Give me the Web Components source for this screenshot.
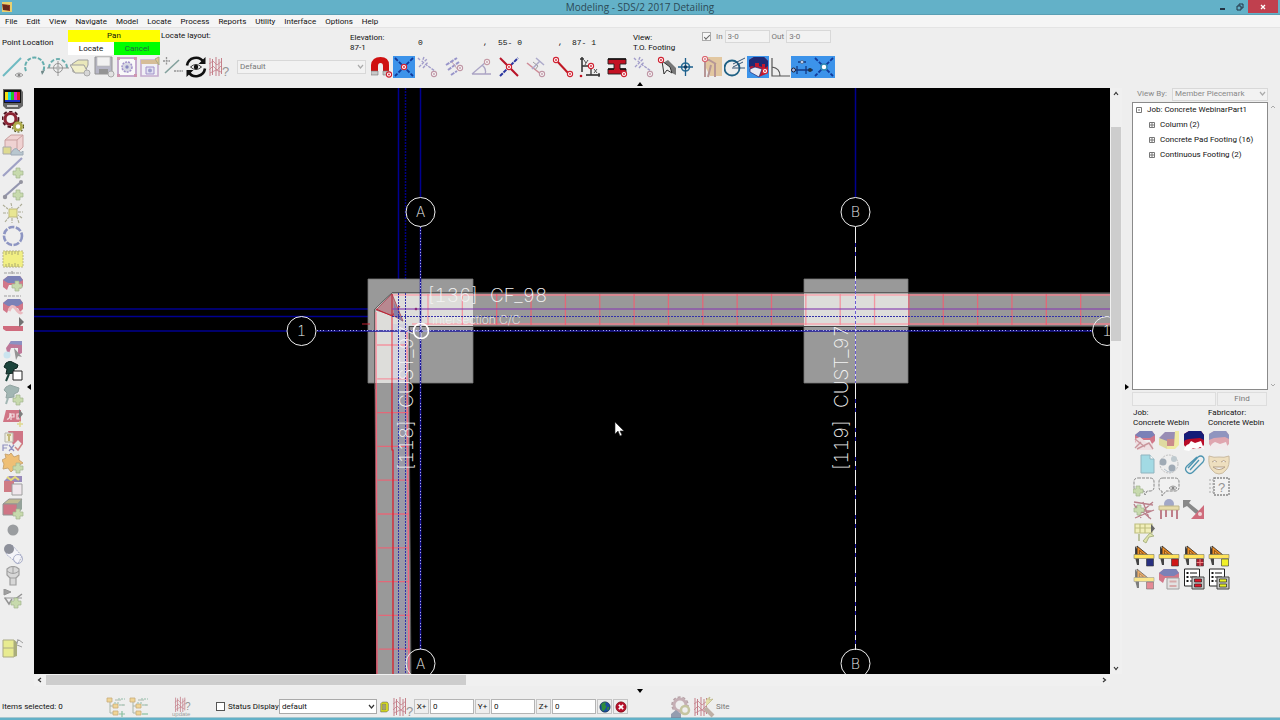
<!DOCTYPE html>
<html lang="en">
<head>
<meta charset="utf-8">
<title>Modeling - SDS/2 2017 Detailing</title>
<style>
html, body { margin: 0; height: 100%; }
body { font: 8px/10px Roboto, "Open Sans", sans-serif; color: #111; background: #eee; overflow: hidden; }
</style>
</head>
<body>
<modeling-app></modeling-app>
<script>
const BASE = `*{box-sizing:border-box}button,input,select{font:inherit;color:inherit;margin:0;border-radius:0}svg{display:block}`;

function define(name, css, html, setup) {
  const t = document.createElement('template');
  t.innerHTML = `<style>${BASE}${css}</style>${html}`;
  customElements.define(name, class extends HTMLElement {
    constructor() {
      super();
      this.attachShadow({ mode: 'open' }).append(t.content.cloneNode(true));
    }
    connectedCallback() { if (setup) setup(this, this.shadowRoot); }
  });
}

/* ---------- icon drawings, all on a 22 x 22 grid ---------- */
const PLUS = (x, y, c = '#b4d08c') => `<path d="M${x + 3} ${y}h4v3h3v4h-3v3h-4v-3h-3v-4h3z" fill="${c}" stroke="#7c9a60" stroke-width=".7"/>`;
const TARGET = (x, y, c = '#d02030') => `<circle cx="${x}" cy="${y}" r="2.6" fill="#fff" stroke="${c}" stroke-width="1.1"/><circle cx="${x}" cy="${y}" r=".9" fill="${c}"/>`;
const EYE = (x, y, c = '#555') => `<path d="M${x - 4} ${y}q4-4 8 0q-4 4-8 0z" fill="#eee" stroke="${c}" stroke-width=".8"/><circle cx="${x}" cy="${y}" r="1.5" fill="${c}"/>`;
const FENCE = `<g fill="none" stroke="#b04858" stroke-width="1"><path d="M2 2v18M4.500 3v16M8 1v19M11 3v17M13.500 2v16"/><path d="M1 8l4-3 4 4 5-4M1 14l4-4 4 4 5-5M2 17l6-3 5 2" stroke-width=".8"/></g>`;
const BEAM = (x, y, s = 1) => `<g transform="translate(${x} ${y}) scale(${s})"><path d="M1 4l5-4h12l3 4v6l-3 3-2-4H7l-2 5-4-3z" fill="#c43a56"/><path d="M1 4l5-4h12l3 4-5 3H6z" fill="#41499c"/></g>`;
const SQUARE = (c) => `<path d="M2 1l4 6v13H4L2 12z" fill="#444"/><path d="M4 1l11 9H4z" fill="#e98a24" stroke="#222" stroke-width=".8"/><path d="M6.500 5.500l4 3.500h-4z" fill="#fff3" stroke="#553000" stroke-width=".6"/><path d="M1 9.500h20v4H1z" fill="#ffe25a" stroke="#776" stroke-width=".6"/><path d="M13.500 14h7v7h-7z" fill="${c}" stroke="#333" stroke-width=".6"/>`;
const LIST = (c) => `<path d="M1.500 1h15v17h-15z" fill="#fff" stroke="#222"/><path d="M7 5h7M7 9h7M7 13h4" stroke="#111" stroke-width="1.200"/><path d="M3.500 4h2v2h-2zM3.500 8h2v2h-2zM3.500 12h2v2h-2z" fill="#111"/><path d="M9 9h12v12H9z" fill="#c8c8c8" stroke="#444"/><path d="M11.500 11h7v3h-7zM11.500 16h7v3h-7z" fill="${c}" stroke="#222" stroke-width=".7"/>`;
const Q = (x, y, s = 13) => `<text x="${x}" y="${y}" font-family="Liberation Sans,sans-serif" font-size="${s}" fill="#666">?</text>`;
const TREE = (s) => `<path d="M5 4v13M5 10h5M5 17h5M10 4h6M16 9h4" fill="none" stroke="#8a9a8a" stroke-width="1"/><path d="M2 2h5v4H2zM8 8h5v4H8zM8 15h5v4H8z" fill="#f2c96a" stroke="#b58a40" stroke-width=".8"/><path d="M13 3h7M14 9h6M9 7h6" stroke="#93bda8" stroke-width="1.500" stroke-dasharray="2 1"/>${s}`;

const ICONS = {
  line: `<path d="M2 20L20 2" stroke="#2da0ac" stroke-width="2"/>${EYE(18, 19)}`,
  arc: `<path d="M2 15a9.500 9.500 0 1 1 16 2" fill="none" stroke="#1d8d8d" stroke-width="2" stroke-dasharray="4 1.500"/><path d="M17 15l4-1-3 5z" fill="#355"/>`,
  centre: `<path d="M2 12a9 9 0 0 1 18 0" fill="none" stroke="#2c8f8f" stroke-width="2" stroke-dasharray="4 2"/><path d="M0 12h22M11 5v15" stroke="#666"/><circle cx="11" cy="12" r="4.500" fill="none" stroke="#666"/><circle cx="11" cy="12" r="2" fill="#999"/>`,
  folder: `<path d="M2 8l6-4h10v5l-3 7H3z" fill="#e9e6a0" stroke="#777"/><path d="M0 9h14l4 8H5z" fill="#f4f1b8" stroke="#777"/><circle cx="17" cy="17" r="3" fill="#ccc" stroke="#888"/>`,
  disk: `<path d="M2 1h17v17H2z" fill="#9a9ab0" stroke="#666"/><path d="M4 1h13v9H4z" fill="#f4f4f4" stroke="#999" stroke-width=".6"/><path d="M6 13h9v5H6z" fill="#666"/><circle cx="18" cy="18" r="3" fill="#ddd" stroke="#888"/>`,
  frame: `<path d="M2 2h18v18H2z" fill="#fff" stroke="#b08ac0" stroke-width="2"/><circle cx="11" cy="11" r="5" fill="#ccd" stroke="#7a62b8" stroke-width="1.500" stroke-dasharray="2 1"/><circle cx="11" cy="11" r="1.700" fill="#55a"/><path d="M1 1h3v3H1zM18 1h3v3h-3zM1 18h3v3H1zM18 18h3v3h-3z" fill="#c06a90"/>`,
  layout: `<path d="M2 4h17v16H2z" fill="#f2f2fa" stroke="#b08ac0" stroke-width="1.600"/><path d="M2 4h18v4H2z" fill="#caa46c"/><path d="M7 11h8v7H7z" fill="#dcdcf4" stroke="#7a62b8"/><circle cx="11" cy="14.500" r="2" fill="#77b"/><path d="M16 3l4-2v8z" fill="#e0b060" stroke="#885"/>`,
  plusminus: `<path d="M1 5h7M4.500 1v8M12 15h9" stroke="#666" stroke-width="1.300" stroke-dasharray="2 .7"/><path d="M3 17L17 4" stroke="#4d7a74" stroke-width="1.600"/>`,
  refresh: `<g fill="none" stroke="#111" stroke-width="2.600"><path d="M2 9.500A9 9 0 0 1 18.500 6M20 12.500A9 9 0 0 1 3.500 16"/></g><path d="M20.500 1v7h-7zM1.500 21v-7h7z" fill="#111"/><path d="M5.500 11q5.500-5 11 0q-5.500 5-11 0z" fill="#fff" stroke="#333"/><circle cx="11" cy="11" r="2.300" fill="#111"/>`,
  fenceq: `${FENCE}${Q(14, 20)}`,
  magnet: `<path d="M0 17V9Q1 1 9.500 1T18 9v8h-6V10q0-3-2.500-3T7 10v7z" fill="#cf1010"/><path d="M0 15h7v4H0zM12 15h6v4h-6z" fill="#c8c8c8" stroke="#777" stroke-width=".6"/>${TARGET(18, 18.5)}`,
  snapx: `<path d="M2 2l18 18M20 2L2 20" stroke="#123a9a" stroke-width="1.800" stroke-dasharray="4 1.500"/>${TARGET(11, 11)}`,
  nearest: `<path d="M1 2l2 2M7 1l-2 5M2 11l8-8M8 8l10 7M6 12l5-6" stroke="#7b74b8" stroke-width="1.400" stroke-dasharray="3 1"/>${TARGET(17, 18, '#a86a80')}`,
  parallel: `<path d="M2 9l11-7M4 14l11-8M7 19l6-4" stroke="#6d68b8" stroke-width="2" stroke-dasharray="4 1"/><path d="M8 6l6 8" stroke="#b08090"/>${TARGET(16, 12, '#a86a80')}`,
  angle: `<path d="M1 18h19M1 18L15 6M11 9q5 4 3 9" fill="none" stroke="#8a7fb0" stroke-width="1.300"/>${TARGET(16, 6, '#b07080')}`,
  cross: `<path d="M2 20L20 2" stroke="#2b36a0" stroke-width="2" stroke-dasharray="4 1"/><path d="M2 2l18 18" stroke="#b81428" stroke-width="2"/>${TARGET(11, 11)}`,
  perp: `<path d="M2 7l15 12" stroke="#c0586a" stroke-width="1.600"/><path d="M7 13l8-8M11 2l8 7" stroke="#8c88b8" stroke-width="1.500"/><path d="M8 6l5 4-3 4" fill="none" stroke="#777"/>${TARGET(17, 18, '#a86a80')}`,
  endpts: `<path d="M4 4l13 14" stroke="#c01824" stroke-width="2"/>${TARGET(4, 4)}${TARGET(18, 18)}`,
  axes: `<path d="M3 1v15M7 19h14" stroke="#222" stroke-width="1.400"/><path d="M3 10h7M12 12v7M1 3h4M20 17v4" stroke="#333" stroke-width="1.300"/><path d="M5 4l2 3 2-3M7 7l-1 2M15 13l3 4M18 13l-3 4" fill="none" stroke="#444" stroke-width=".9"/>${TARGET(12, 10)}<circle cx="2" cy="20" r="1.300" fill="#c01020"/>`,
  ibeam: `<path d="M2 3h18v5h-6v5h6v5H2v-5h6V8H2z" fill="#c41224" stroke="#222" stroke-width=".9"/><path d="M2 3h18M2 13h6M14 13h6" stroke="#111" stroke-width="1.500"/>${TARGET(18, 18)}`,
  pick: `<path d="M8 7l5-3 8 8v7l-4-2z" fill="#777"/><path d="M7 5l2 13 3-4 5 3-2-6z" fill="#eee" stroke="#333"/>${TARGET(6, 4)}`,
  cross2: `<circle cx="7.500" cy="11" r="4" fill="none" stroke="#2c6f96" stroke-width="1.600"/><path d="M0 11h15M7.500 2v18" stroke="#1d5f8c" stroke-width="1.300"/><circle cx="7.500" cy="11" r="1.800" fill="#123c60"/>`,
  detail: `<path d="M5 1h16v19H9L5 12z" fill="#dcb478"/><path d="M1 4h7l7 4M4 6v15M10 9l-3 12M14 8v13" fill="none" stroke="#9a6a6a" stroke-width="2"/>${TARGET(4, 3)}`,
  circle: `<circle cx="8" cy="12" r="7.500" fill="none" stroke="#1e6084" stroke-width="1.800"/><path d="M8 12h13M9 8l12-6M9 11l10-5" stroke="#246" stroke-width=".9"/>`,
  solid: `<path d="M2 4l5-3h10l4 4v12l-9 4-9-6z" fill="#c01830"/><path d="M2 4l5-3h10l4 4v5l-3 2V8h-3v3l-3-1V7H8v4l-3-1-3 1z" fill="#1e2a74"/><path d="M3 13l5-2 7 2-3 8-9-5z" fill="#e8e8f2" stroke="#1e2a74" stroke-width=".7"/>${TARGET(18, 15)}`,
  corner: `<path d="M2 2v18h18M2 11q8 1 8 9" fill="none" stroke="#555" stroke-width="1.200"/>`,
  chain: `<path d="M1 14h21M6 10v8M15 10v8M7 6h8" stroke="#123a84" stroke-width="1.300"/><circle cx="2.500" cy="14" r="2" fill="#a0b8e8" stroke="#223"/><circle cx="19" cy="14" r="2" fill="#234"/><circle cx="11" cy="6" r="1.600" fill="#c8d8f8" stroke="#456" stroke-width=".6"/>`,
  snapw: `<path d="M2 2l18 18M20 2L2 20" stroke="#123a9a" stroke-width="1.800" stroke-dasharray="4 1.500"/><circle cx="11" cy="11" r="3" fill="#fff" stroke="#2c86b0" stroke-width="1.500"/>`,

  monitor: `<path d="M1 1h18l2 3v14l-4 3H4l-3-3z" fill="#666"/><path d="M2 2h17v13H2z" fill="#111"/><path d="M3 4h3v8H3z" fill="#f4e010"/><path d="M6 4h3v8H6z" fill="#18d8e0"/><path d="M9 4h3v8H9z" fill="#20c820"/><path d="M12 4h3v8h-3z" fill="#e020d0"/><path d="M15 4h3v8h-3z" fill="#e02020"/><path d="M3 12h15v2H3z" fill="#1830c0"/><path d="M5 17h11v2H5z" fill="#ccc"/>`,
  gears: `<circle cx="8.500" cy="8" r="8" fill="none" stroke="#4b1420" stroke-width="1.800" stroke-dasharray="3.500 2.500"/><circle cx="8.500" cy="8" r="5.500" fill="#f4f4f4" stroke="#8c2434" stroke-width="3.200"/><circle cx="16" cy="15.500" r="5.500" fill="none" stroke="#55551c" stroke-width="1.200" stroke-dasharray="2 1.500"/><circle cx="16" cy="15.500" r="3.600" fill="#fff" stroke="#aeac4c" stroke-width="2.800"/>`,
  cube: `<path d="M3 6l6-5h12v12l-5 5H3z" fill="#f0c4c4" stroke="#b87878"/><path d="M3 6h12v12M15 6l6-5" fill="none" stroke="#b87878"/><path d="M1 13h8v7H1z" fill="#d6d060" stroke="#888"/><path d="M9 19q4-7 7-3t5 1v4H9z" fill="#9fb4c0" stroke="#789"/>`,
  segplus: `<path d="M1 19L20 1" stroke="#777ab0" stroke-width="2.200"/>${PLUS(11, 11)}`,
  segdots: `<path d="M2 18L19 3" stroke="#666a90" stroke-width="2.200"/><circle cx="3" cy="18" r="2.200" fill="#667"/><circle cx="19" cy="3" r="2" fill="#667"/>${PLUS(11, 11)}`,
  sun: `<path d="M7 7h8v8H7z" fill="#e6e264" stroke="#a8a040"/><path d="M1 3l5 4M9 1l1 5M20 2l-5 5M1 11h5M16 10h5M3 20l4-5M10 16v5M17 21l-2-6M20 16l-4-3" stroke="#8a8a68" stroke-width="1.100" stroke-dasharray="3 1"/>`,
  ring: `<circle cx="11" cy="11" r="9" fill="none" stroke="#5c68ac" stroke-width="2.600" stroke-dasharray="6 1.500"/>`,
  ruler: `<path d="M1 3h20v16H1z" fill="#f3f04c" stroke="#a09c50" stroke-dasharray="2 1"/><path d="M4 3v4M7 3v3M10 3v4M13 3v3M16 3v4M4 19v-3M7 19v-4M10 19v-3M13 19v-4M16 19v-3" stroke="#8a8630"/>`,
  beamplus: `${BEAM(0, 6)}<path d="M2 3h17M10 1v4" stroke="#777" stroke-width="1.200" stroke-dasharray="3 1"/>${PLUS(10, 11)}`,
  beamlink: `${BEAM(0, 6)}<path d="M2 3h17" stroke="#777" stroke-width="1.200" stroke-dasharray="3 1"/><path d="M7 18q3-8 7-2t6 3" fill="none" stroke="#e8a0a8" stroke-width="3"/>`,
  redbar: `<path d="M1 10h20v5H4l-3-2z" fill="#c02844"/><path d="M17 1l5 5-5 5z" fill="#333"/>`,
  beamarrow: `<path d="M4 9l5-7h11v12l-4 2v-7H9l-3 8z" fill="#a83a6c"/><path d="M7 5l2-3h11v4z" fill="#5a60ac"/><circle cx="5" cy="16" r="3.500" fill="#b8e0f0"/><path d="M12 9l2 12 2-4 4 1z" fill="#666"/>`,
  pin: `<path d="M4 2l4-2 8 4-1 3-3 1v4l-8 1 1-5-3-2z" fill="#1c443c" stroke="#0c2420"/><path d="M7 13l-3 7" stroke="#1c443c" stroke-width="2"/><path d="M11 10h9v9h-9z" fill="#fff" stroke="#222"/>`,
  pinplus: `<path d="M4 3l4-2 9 3-1 4-4 2v3l-8 1 1-5-3-3z" fill="#7c9a96" stroke="#64807c"/><path d="M6 14l-2 6" stroke="#7c9a96" stroke-width="2"/>${PLUS(11, 11)}`,
  jpg: `<path d="M4 3h15v12H1z" fill="#c23850"/><path d="M5 12q3 1 3-6M9 13V7h3v3H9M18 7h-3v5h2v-2" fill="none" stroke="#f4d8dc" stroke-width="1.200"/><path d="M17 2l4 5-4 5z" fill="#444"/><path d="M18 14v6M15 17h6" stroke="#d8d060" stroke-width="1.500"/>`,
  fx: `<path d="M6 1h15v14l-5-5-5 5z" fill="#c03850"/><path d="M3 3h8v9H3z" fill="#f0ecd0" stroke="#998"/><path d="M7 4v7M5 5h4" stroke="#b0a040" stroke-width="2"/><path d="M1 21v-6h5M1 18h4M7 15l5 6M12 15l-5 6" fill="none" stroke="#6060a8" stroke-width="1.200"/><path d="M13 17l3 3 4-6" fill="none" stroke="#c05050" stroke-width="1.500"/>`,
  star: `<path d="M9 1l3 4 5-2v5l4 3-4 2v5l-5-1-3 3-3-4-5 1 1-5-2-4 4-2-1-4 4 1z" fill="#f0a838" stroke="#b88030"/>${PLUS(11, 11)}`,
  cubered: `<path d="M2 6l5-5h13v6H8v10H2z" fill="#6c58a0"/><path d="M2 6h10v11H2z" fill="#c04050"/><path d="M5 2l4 3 4-3 4 3" fill="none" stroke="#e0d040" stroke-width="2"/><path d="M10 9h10v11H10z" fill="#f0e4ec" stroke="#777"/>`,
  cubeplus: `<path d="M1 6l6-5h13l-4 5z" fill="#a8a060" stroke="#666"/><path d="M1 6h14v11H1z" fill="#c03850" stroke="#666"/><path d="M15 6l5-5v10l-5 6z" fill="#667c70"/>${PLUS(11, 11)}`,
  dot: `<circle cx="11" cy="9" r="5.500" fill="#707478"/>`,
  cylinder: `<path d="M10 2l10 11-4 8L4 11z" fill="#f8f8ff" stroke="#8890b8" stroke-dasharray="2 1"/><circle cx="7" cy="6" r="5" fill="#5c6070"/><circle cx="16" cy="16" r="4.500" fill="none" stroke="#8890b8"/>`,
  column: `<path d="M5 3q6-5 12 0v6l-3 3v7H8v-7L5 9z" fill="#ccc" stroke="#777" stroke-width="1.200"/><path d="M5 5q6 5 12 0M8 12h6M11 1v6" fill="none" stroke="#777"/>`,
  flags: `<path d="M2 0v6l7-3zM2 9h18" fill="#777" stroke="#666" stroke-width="1"/><path d="M3 9l4 6 3-5M20 5l-8 6" fill="none" stroke="#666" stroke-width="1.500"/>${PLUS(9, 9)}`,
  chest: `<path d="M1 3h11v17H1z" fill="#e6ea60" stroke="#8a8a50"/><path d="M1 11h11" stroke="#8a8a50"/><path d="M12 3l3 2v14l-3 1z" fill="#888c40"/><path d="M14 6l3-3 4 3M15 8l5 2M16 2l-1 5" fill="none" stroke="#777"/>`,

  beamA: `${BEAM(1, 1)}<path d="M2 9l5-2 6 5 7 2v6H4z" fill="#f0d8dc"/><path d="M2 9l10 8M4 19l12-6 4 6M8 12l-6 6" fill="none" stroke="#b86a74" stroke-width="1.400"/>`,
  beamB: `<path d="M1 8l6-6h10v10H6z" fill="#6c5c98"/><path d="M1 8l8 3v8l-8-4z" fill="#d8d078"/><path d="M9 9h8v8H9z" fill="#b85858"/><path d="M17 1h4v14l-4 4H9v-3h7z" fill="#f0e87c"/>`,
  beamC: `<path d="M1 4l5-3h12l3 4v10l-3 3-14 1-3-4z" fill="#b80c28"/><path d="M1 4l5-3h12l3 4v5l-4-2-11 1-4 1-1 2z" fill="#141c78"/><path d="M1 20q1-5 5-6l2-3 4 2 6-2 3 8-4-2-3 2-4-1-4 3z" fill="#fff"/>`,
  beamD: `<path d="M1 4l5-3h12l3 4v9l-3 3-14 1-3-4z" fill="#d88090"/><path d="M1 4l5-3h12l3 4v4l-4-2-11 1-5 2z" fill="#6068a8"/><path d="M2 19q0-5 5-7l5 2 6-2 3 9-5-1-4-2-4 2z" fill="#f4e8ec"/>`,
  doc: `<path d="M8 2h9l4 4v14H8z" fill="#7cd0e0" stroke="#6098a8"/><path d="M17 2v4h4" fill="#fff" stroke="#6098a8"/>`,
  film: `<circle cx="11" cy="11" r="9" fill="none" stroke="#aaa" stroke-dasharray="2 1"/><circle cx="5" cy="9" r="3.500" fill="#789"/><circle cx="16" cy="6" r="3" fill="#a8b8c0"/><circle cx="14" cy="15" r="3.500" fill="#789"/><path d="M6 16q4 4 8 3" fill="none" stroke="#9ab"/>`,
  clip: `<path d="M5 15L15 4q3-2 5 0t0 5L10 19q-3 3-6 0t0-6L14 4M7 17l9-10" fill="none" stroke="#4c94b0" stroke-width="1.300"/>`,
  mask: `<path d="M1 3q5 2 10 1 5 1 10-1 1 10-3 14-3 4-7 4t-7-4Q0 13 1 3z" fill="#eed8a8" stroke="#b8a078"/><path d="M4 9q3-3 5 0M13 9q3-3 5 0M5 14q6 5 12 0z" fill="#fff" stroke="#987850"/>`,
  noteplus: `<path d="M5 2h12q4 0 4 4v5q0 4-4 4h-3l-2 4-1-4H5q-4 0-4-4V6q0-4 4-4z" fill="#f4f4f4" stroke="#555" stroke-dasharray="3 1"/>${PLUS(0, 10)}`,
  noteeye: `<path d="M5 2h12q4 0 4 4v5q0 4-4 4H8l-4 5V15q-3 0-3-4V6q0-4 4-4z" fill="#f4f4f4" stroke="#555" stroke-dasharray="3 1"/>${EYE(15, 12)}`,
  unknown: `<path d="M6 2h15v17H6z" fill="#f4f4f4" stroke="#555" stroke-width="1.400" stroke-dasharray="2 1"/><path d="M1 4h5M1 8h5M1 12h5M1 16h5" stroke="#888" stroke-dasharray="2 1"/>${Q(10, 16)}`,
  truss: `<path d="M1 3l19 3M2 19l19-8M3 7l15 13M5 16L20 3M2 12h17M1 5l7 14M10 3l6 16" stroke="#a04858" stroke-width="1.300"/>${PLUS(1, 6)}`,
  table: `<circle cx="11" cy="5" r="5" fill="#7c84b4"/><path d="M1 7h20v4H1z" fill="#e4d488" stroke="#a89858"/><path d="M3 11v9M8 11v7M14 11v7M19 11v9" stroke="#a84858" stroke-width="2"/>`,
  crane: `<path d="M0 1h8l-2 3 10 8-3 3-9-8-4 2z" fill="#555"/><path d="M8 20l13-14v14z" fill="#c02840"/><circle cx="17" cy="15" r="2" fill="#f0c8cc"/>`,
  wrench: `<path d="M2 2h17v9H2zM7 2v9M12 2v9M2 6h17" fill="#f4f0a0" stroke="#a8a848" stroke-width="1.200"/><path d="M18 2l4 4.500-4 4.500z" fill="#222"/><path d="M6 12v7" stroke="#8a9850" stroke-width="1.500"/><path d="M10 19l7-8 4 3-5 1-3 6z" fill="#d8e088" stroke="#8a9850"/>`,
  squareblue: SQUARE('#283080'), squarered: SQUARE('#d01818'), squaregrid: SQUARE('#a82030') + '<path d="M17 14v7M13.500 17.500h7" stroke="#e88"/>', squareyellow: SQUARE('#f0f028'), squarefade: SQUARE('#e05868'),
  beamsheet: `${BEAM(0, 1)}<path d="M9 10h12v11H9z" fill="#ddd" stroke="#777"/><path d="M11.500 12.500h7v2h-7zM11.500 17h7v2h-7z" fill="#c88"/>`,
  listred: LIST('#e01828'), listyellow: LIST('#e8f028'),

  treeplus: TREE('<path d="M14 18h6M17 15v6" stroke="#58a878" stroke-width="1.200"/>'),
  treeminus: TREE('<path d="M14 18h6" stroke="#58a878" stroke-width="1.200"/>'),
  fenceupdate: `<g transform="translate(3 0) scale(.8)">${FENCE}</g>${Q(14, 14, 10)}<text x="1" y="20" font-family="Liberation Sans,sans-serif" font-size="6" fill="#777">update</text>`,
  cog: `<circle cx="10" cy="9" r="6" fill="#eee" stroke="#b09098" stroke-width="3"/><circle cx="10" cy="9" r="8" fill="none" stroke="#987880" stroke-width="1.500" stroke-dasharray="3 2"/><circle cx="15" cy="14" r="4" fill="#eee" stroke="#b0b078" stroke-width="2.500"/><path d="M1 18l5-4 5 4v4H1z" fill="#667490"/>`,
  fencelink: `${FENCE}<path d="M12 12l8 8" stroke="#a89080" stroke-width="4"/><path d="M13 4l4-3-1 3 4-1-7 7" fill="#e0d888" stroke="#a09850" stroke-width=".7"/>`,
  lamp: `<path d="M5 5l3-3h9l2 3v12l-3 3H5z" fill="#dbe020" stroke="#555"/><path d="M8 6h6v10H8z" fill="#ffffb0" stroke="#444"/><path d="M11 7v8" stroke="#554" stroke-width="2"/>`,
  globe: `<circle cx="11" cy="11" r="9.500" fill="#1c4fa0" stroke="#123"/><path d="M4 6q5-5 9-3l-2 4 3 3-3 5-3 4Q4 16 5 12zM15 12l4-2-1 5-3 2z" fill="#2f8c3c"/>`,
  cancel: `<circle cx="11" cy="11" r="9.500" fill="#b8102c" stroke="#600"/><path d="M7 7l8 8M15 7l-8 8" stroke="#fff" stroke-width="3"/>`
};

customElements.define('sds-icon', class extends HTMLElement {
  connectedCallback() {
    if (this.shadowRoot) return;
    this.attachShadow({ mode: 'open' }).innerHTML =
      `<style>:host{display:block;flex:none;width:22px;height:22px}:host([off]){opacity:.66}:host([on]){background:#3c93ea}svg{display:block;width:100%;height:100%}</style>
       <svg viewBox="0 0 22 22" aria-hidden="true">${ICONS[this.getAttribute('name')] || ''}</svg>`;
  }
});

/* An icon button; names ending in "-" are greyed out, names ending in "+" are switched on. */
customElements.define('icon-group', class extends HTMLElement {
  connectedCallback() {
    if (this.shadowRoot) return;
    const buttons = this.getAttribute('icons').trim().split(/\s+/).map(n => {
      if (n === '_') return '<span></span>';
      const key = n.replace(/[-+]$/, '');
      return `<button type="button" aria-label="${key}"><sds-icon name="${key}" ${n.endsWith('-') ? 'off' : ''} ${n.endsWith('+') ? 'on' : ''}></sds-icon></button>`;
    }).join('');
    this.attachShadow({ mode: 'open' }).innerHTML =
      `<style>:host{display:flex;gap:var(--gap,1px)}:host([vertical]){flex-direction:column}:host([grid]){display:grid;grid-template-columns:repeat(4,22px);gap:1px 3px}
       button{display:block;padding:0;border:0;background:none;flex:none}span{width:22px;height:22px}</style>${buttons}`;
  }
});

define('chevron-select', `
  :host{display:grid;position:relative}
  select,svg{grid-area:1/1}
  select{appearance:none;width:100%;height:100%;border:1px solid var(--line,#d8d8d8);background:var(--fill,#f2f2f2);padding:0 12px 0 2px;color:inherit;opacity:1;line-height:10px;outline:0}
  svg{place-self:center end;width:10px;height:6px;pointer-events:none;color:var(--arrow,#aaa)}`,
  `<select></select><svg viewBox="0 0 10 6"><path d="M2 1l2.500 3L7 1" fill="none" stroke="currentColor" stroke-width="1.200"/></svg>`,
  (host, root) => {
    const s = root.querySelector('select');
    s.innerHTML = `<option>${host.getAttribute('value')}</option>`;
    s.setAttribute('aria-label', host.getAttribute('label'));
    s.disabled = host.hasAttribute('disabled');
  });

define('title-bar', `
  :host{display:grid;grid-template-columns:1fr auto 1fr;height:15px;background:#63b1c8;color:#2c4a56;font:10px/15px "Open Sans",sans-serif;border-bottom:1px solid #5a9fb4}
  .logo{width:12px;height:12px;margin:1px}
  .win{display:flex;justify-content:flex-end;margin-right:2px}
  .win button{border:0;background:none;width:17px;height:13px;padding:0;display:grid;place-items:center}
  .win .close{background:#c0404e;width:30px}`,
  `<svg class="logo" viewBox="0 0 12 12"><path d="M1 1h10v10H1z" fill="#e8d070"/><path d="M1 3l8 1v6l-7-1z" fill="#8c3020"/><path d="M3 4v5M5 4v5M7 5v4" stroke="#402018"/></svg>
   <span>Modeling - SDS/2 2017 Detailing</span>
   <div class="win"><button aria-label="Minimize"><svg width="8" height="8"><path d="M1 6h5" stroke="#234" stroke-width="2"/></svg></button>
   <button aria-label="Restore"><svg width="8" height="8"><path d="M1 3h4v4H1zM3 3V1h4v4H5" fill="none" stroke="#234"/></svg></button>
   <button class="close" aria-label="Close"><svg width="8" height="8"><path d="M2 2l4 4M6 2L2 6" stroke="#fff" stroke-width="1.300"/></svg></button></div>`);

define('menu-bar', `
  :host{display:flex;gap:9px;height:13px;padding:0 5px;background:#f5f5f5;border-bottom:1px solid #e4e4e4}
  button{border:0;background:none;padding:0;line-height:13px}`,
  ['File', 'Edit', 'View', 'Navigate', 'Model', 'Locate', 'Process', 'Reports', 'Utility', 'Interface', 'Options', 'Help'].map(m => `<button>${m}</button>`).join(''));

define('locate-bar', `
  :host{display:grid;grid-template-columns:66px 93px 189px 68px 215px 69px auto 1fr;height:27px;padding:2px 2px 0;align-items:start}
  .mid{align-self:center}
  .keys{display:grid;grid-template-columns:46px 46px;grid-template-rows:12px 13px;text-align:center}
  .keys span{grid-column:1/3;background:#ff0;line-height:12px}
  .keys button{border:0;padding:0;line-height:13px;background:#fff}
  .keys button+button{background:#0f0;color:#264}
  .lay{padding-top:1px}
  .two{padding-top:3px}
  .coords{display:grid;grid-template-columns:65px 15px 60px 14px auto;font:8px/10px "Liberation Mono",monospace;align-self:center}
  .range{display:flex;align-items:center;gap:2px;color:#777}
  .range input[type=text]{width:45px;height:13px;border:1px solid #d8d8d8;background:#f2f2f2;padding:0 2px;margin-left:0}
  .range input[type=checkbox]{appearance:none;width:9px;height:9px;border:1px solid #aaa;background:#f6f6f6;margin-right:3px;display:grid;place-items:center}
  .range input[type=checkbox]::before{content:"";width:5px;height:2px;border:solid #666;border-width:0 0 1px 1px;transform:rotate(-45deg)}`,
  `<span class="mid">Point Location</span>
   <div class="keys"><span>Pan</span><button>Locate</button><button>Cancel</button></div>
   <span class="lay">Locate layout:</span>
   <div class="two">Elevation:<br>87-1</div>
   <div class="coords"><span>0</span><span>,</span><span>55- 0</span><span>,</span><span>87- 1</span></div>
   <div class="two">View:<br>T.O. Footing</div>
   <div class="range"><input type="checkbox" id="clip" checked aria-label="Depth range"><label for="in">In</label><input type="text" id="in" value="3-0" disabled><label for="out">Out</label><input type="text" id="out" value="3-0" disabled></div>`);

define('tool-bar', `
  :host{display:flex;height:24px;align-items:center;padding:0 0 1px 1px}
  chevron-select{width:129px;height:14px;margin:0 5px 0 7px;color:#777}
  .snap{--gap:0px;margin-right:2px}.wide{--gap:5px}.last{--gap:0px;margin-left:-1px}`,
  `<icon-group icons="line- arc- centre- folder- disk- frame- layout- plusminus- refresh fenceq-"></icon-group>
   <chevron-select label="Saved view" value="Default" disabled></chevron-select>
   <icon-group class="snap" icons="magnet snapx+"></icon-group>
   <icon-group class="wide" icons="nearest- parallel- angle- cross perp- endpts axes ibeam nearest-"></icon-group>
   <icon-group icons="pick cross2 detail- circle solid+ corner"></icon-group>
   <icon-group class="last" icons="chain+ snapw+"></icon-group>`);

define('fold-arrow', `
  :host{display:grid;place-items:center}
  button{border:0;background:none;padding:0;display:block}
  :host([dir=left]) svg{rotate:-90deg}:host([dir=right]) svg{rotate:90deg}:host([dir=down]) svg{rotate:180deg}`,
  `<button aria-label="Fold"><svg width="6" height="6"><path d="M0 5l3-4 3 4z" fill="#000"/></svg></button>`);

define('tool-rail', `
  :host{display:flex;flex-direction:column;padding:0 0 0 2px}
  .end{margin-top:26px}`,
  `<icon-group vertical icons="monitor gears cube- segplus-"></icon-group>
   <icon-group vertical icons="segdots- sun- ring- ruler-"></icon-group>
   <icon-group vertical icons="beamplus- beamlink- redbar- beamarrow-"></icon-group>
   <icon-group vertical icons="pin pinplus- jpg- fx-"></icon-group>
   <icon-group vertical icons="star- cubered- cubeplus- dot-"></icon-group>
   <icon-group vertical icons="cylinder- column- flags-"></icon-group>
   <icon-group vertical class="end" icons="chest-"></icon-group>`);

define('scroll-strip', `
  :host{display:flex;background:#f0f0f0}
  :host([vertical]){flex-direction:column;width:12px}
  :host([horizontal]){height:12px}
  .arrow{flex:none;width:12px;height:12px;padding:0;border:0;background:none;display:grid;place-items:center}
  .track{flex:1;display:flex;flex-direction:inherit}
  .lead{flex:0 1 var(--lead,0px)}
  .thumb{background:#cdcdcd;flex:0 1 var(--size)}
  :host([vertical]) .thumb{margin:0 1px}:host([horizontal]) .thumb{margin:1px 0}
  :host([vertical]) svg{rotate:90deg}
  .arrow+.track+.arrow{scale:-1}`,
  `<button class="arrow" aria-label="Scroll back"><svg width="6" height="6"><path d="M4 1L1.500 3 4 5" fill="none" stroke="#333" stroke-width="1.200"/></svg></button>
   <div class="track"><div class="lead"></div><div class="thumb"></div></div>
   <button class="arrow" aria-label="Scroll on"><svg width="6" height="6"><path d="M4 1L1.500 3 4 5" fill="none" stroke="#333" stroke-width="1.200"/></svg></button>`);

/* ---------- plan view drawing ---------- */
const ticksX = Array.from({ length: 20 }, (_, i) => 428 + 34.35 * i).map(x => `M${x} 294V325`).join('');
const ticksY = Array.from({ length: 10 }, (_, i) => 345 + 33.8 * i).map((y, i) => `M${377 + i * .2} ${y}h31`).join('');
const bubble = (x, y, t) => `<circle cx="${x}" cy="${y}" r="14.500" fill="none" stroke="#f0f0f0"/><text x="${x}" y="${y + 5}" font-size="14" text-anchor="middle">${t}</text>`;
define('model-view', `
  :host{display:block;background:#000;overflow:hidden;position:relative;min-width:0}
  svg{position:absolute;width:100%;height:100%}
  text{font-family:Inter,"Open Sans",sans-serif;font-weight:200;font-variant-numeric:tabular-nums;fill:#f4f4f4}`,
  `<svg role="img" aria-label="Plan view, T.O. Footing"><g transform="translate(-34 -88)">
    <g stroke="#000090" stroke-width="1.500"><path d="M398.500 88V293M420.500 88V197M855.500 88V197M34 309H392M34 316.500H392M34 331H287"/><path d="M405.500 88V293" stroke-dasharray="2 1" stroke="#000084"/></g>
    <path d="M368 279h105v104H368zM804 279h104v104H804z" fill="#999" stroke="#777" stroke-width=".8"/>
    <path d="M392 293H1120v33H409V383l2 300H377L375 383V309z" fill="#999" stroke="#555" stroke-width="1"/>
    <path d="M392 293h81v33h-64v57h-34V309zM804 293h104v33H804z" fill="#d2d2ce"/>
    <path d="M392 324h16l2 355h-16z" fill="#a4a0d4" opacity=".25"/>
    <path d="M392 293l-17 16v80M392 293H1120M409 326.500H1120M409 326v57" fill="none" stroke="#444" stroke-width="1"/>
    <path d="M392 295H1120M412 324H1120" stroke="#ff7c8c" stroke-width="1.500" opacity=".8"/>
    <path d="${ticksX}${ticksY}" stroke="#f65c70" stroke-width="1.300" opacity=".8"/>
    <path d="M376 312l1 370M407 330l2 352" stroke="#ff6078" stroke-width="1.500" fill="none" opacity=".85"/>
    <path d="M392 316V450h1V683" stroke="#e01424" stroke-width="1.200" fill="none"/>
    <path d="M804 293h104v33H804zM392 293h81v33H409v57H375V309z" fill="#fff" opacity=".25"/>
    <path d="M392 294l-16 16 18 6 9 5z" fill="#b88890" stroke="#a84454" stroke-width=".8"/><path d="M376 309l16 7 8-10M392 294v22M362 324h8" fill="none" stroke="#c02030" stroke-width="1"/>
    <path d="M394 303l9 19-9-7z" fill="#8480a8"/><circle cx="416" cy="309" r="1.300" fill="#800030"/>
    <path d="M392 309H1112" stroke="#8a44b0" stroke-width="1.500" opacity=".8"/>
    <path d="M392 316.500H1112M398.500 293V683M405.500 293V683" stroke="#3230a8" stroke-width="1" stroke-dasharray="2 1"/>
    <path d="M317 331H1092M420.500 227V650" stroke="#1c189c" stroke-width="1.500"/><path d="M317 330.500H1092M420.500 227V650" stroke="#a8a8f4" stroke-dasharray="1 2 1 2 1 4"/>
    <path d="M855.500 227V279M855.500 383V650" stroke="#1c18a0"/><path d="M855.500 227V279M855.500 383V650" stroke="#f0f0f0" stroke-dasharray="16 4 5 4"/><path d="M855.500 279V383" stroke="#6a5cd0"/><path d="M855.500 279V383" stroke="#e4e0ff" stroke-dasharray="2 3"/>
    <circle cx="421" cy="331" r="7.500" fill="none" stroke="#fff" stroke-width="1.700"/><path d="M414 331h5M423 331h5M421 324v5M421 333v5" stroke="#fff"/>
    ${bubble(420.5, 212, 'A')}${bubble(855.5, 212, 'B')}${bubble(301.5, 331, '1')}${bubble(1107, 331, '1')}${bubble(420.5, 663.5, 'A')}${bubble(855.5, 663.5, 'B')}
    <text y="302" font-size="19"><tspan x="427">[136] </tspan><tspan x="490">CF_98</tspan></text>
    <text x="432" y="324" font-size="12">Intersection C/C</text>
    <text transform="translate(413 471) rotate(-90)" font-size="19"><tspan x="0">[118] </tspan><tspan x="63">CUST_97</tspan></text>
    <text transform="translate(848 471) rotate(-90)" font-size="19"><tspan x="0">[119] </tspan><tspan x="63">CUST_97</tspan></text>
    <path d="M615 422v12l3-3 2 5 2-1-2-4h4z" fill="#fff" stroke="#222" stroke-width=".6"/>
  </g></svg>`);

define('browser-panel', `
  :host{display:grid;grid-template-columns:136px 1fr;align-content:start;grid-auto-rows:auto}
  .by{display:flex;height:12px;align-items:center;justify-content:space-between;padding-left:5px;color:#888;margin-bottom:2px;grid-column:1}
  .by chevron-select{width:96px;height:13px}
  ul{list-style:none;margin:0;padding:0}
  .tree{grid-column:1;height:288px;border:1px solid #8a8a8a;background:#fff;padding:0 3px}
  .tree ul{padding-left:13px}
  .row{display:flex;align-items:center;gap:5px;height:15px;line-height:14px;padding-bottom:1px}
  .row svg{flex:none}
  .side{display:flex;flex-direction:column;justify-content:space-between;align-items:center;padding:2px 3px 2px 0;color:#aaa}
  .find{grid-column:1;display:grid;grid-template-columns:84px 50px;gap:1px;height:14px;margin:2px 0}
  .find input{border:1px solid #ddd;background:#f1f1f1;width:100%;min-width:0}
  .find button{border:1px solid #ddd;background:#efefef;color:#777;padding:0}
  .own{grid-column:1/3;display:grid;grid-template-columns:75px 1fr;padding-left:1px;white-space:nowrap;margin-bottom:2px}
  .own span{overflow:hidden}
  icon-group{grid-column:1/3;margin-left:1px}`,
  `<div class="by"><span>View By:</span><chevron-select label="View by" value="Member Piecemark" disabled></chevron-select></div><i></i>
   <ul class="tree"><li><div class="row"><svg width="6" height="6"><path d="M.5.5h5v5h-5zM2 3h2" fill="#fff" stroke="#777"/></svg>Job: Concrete WebinarPart1</div>
   <ul>${['Column (2)', 'Concrete Pad Footing (16)', 'Continuous Footing (2)'].map(t => `<li class="row"><svg width="6" height="6"><path d="M.5.5h5v5h-5zM1 3h4M3 1v4" fill="#fff" stroke="#777"/></svg>${t}</li>`).join('')}</ul></li></ul>
   <div class="side"><svg width="6" height="6"><path d="M1 4l2-2 2 2" fill="none" stroke="#aaa"/></svg><svg width="6" height="6"><path d="M1 2l2 2 2-2" fill="none" stroke="#aaa"/></svg></div>
   <div class="find"><input type="text" aria-label="Find text" disabled><button disabled>Find</button></div>
   <div class="own"><span>Job:<br>Concrete Webin</span><span>Fabricator:<br>Concrete Webin</span></div>
   <icon-group grid icons="beamA- beamB- beamC beamD- doc- film- clip mask- noteplus- noteeye- _ unknown- truss- table- crane- _ wrench- _ _ _ squareblue squarered squaregrid squareyellow squarefade- beamsheet- listred listyellow"></icon-group>`);

define('status-bar', `
  :host{display:flex;align-items:center;height:23px;padding:1px 0 0 2px;border-bottom:1px solid #a8c8d0}
  .count{width:103px}
  .grp{margin-right:21px}
  .check{display:flex;align-items:center;gap:3px;width:60px;margin:0 3px 0 23px;white-space:nowrap}
  .check input{appearance:none;flex:none;width:9px;height:9px;border:1px solid #555;background:#fff}
  chevron-select{width:98px;height:15px;--line:#aaa;--fill:#fff;--arrow:#333}
  .btn{border:1px solid #c4c4c4;background:#eee;padding:0;height:15px;width:15px;display:grid;place-items:center;flex:none}
  .btn sds-icon{width:12px;height:12px}
  .lampb{width:12px;border:0;margin:0 2px 0 1px}
  .xyz{display:flex;gap:1px}
  .xyz input{width:44px;height:15px;border:1px solid #b4b4b4;background:#fff;padding:0 2px}
  .right{margin-left:42px;display:flex;align-items:center;color:#777}
  .right span{margin-left:1px}`,
  `<span class="count">Items selected: 0</span>
   <icon-group class="grp" icons="treeplus- treeminus-"></icon-group>
   <icon-group icons="fenceupdate-"></icon-group>
   <label class="check"><input type="checkbox">Status Display</label>
   <chevron-select label="Status display" value="default"></chevron-select>
   <button class="btn lampb" aria-label="Lamp"><sds-icon name="lamp"></sds-icon></button>
   <icon-group icons="fenceq-"></icon-group>
   <div class="xyz"><button class="btn">X+</button><input type="text" aria-label="X offset" value="0"><button class="btn">Y+</button><input type="text" aria-label="Y offset" value="0"><button class="btn">Z+</button><input type="text" aria-label="Z offset" value="0"><button class="btn" aria-label="Global"><sds-icon name="globe"></sds-icon></button><button class="btn" aria-label="Cancel"><sds-icon name="cancel"></sds-icon></button></div>
   <div class="right"><icon-group icons="cog- fencelink-"></icon-group><span>Site</span></div>`);

define('modeling-app', `
  :host{display:grid;grid-template-rows:auto auto auto auto 9px minmax(0,1fr) 9px auto 2px;height:100vh}
  .body{display:grid;grid-template-columns:24px 10px minmax(0,1fr) 12px 10px 148px;grid-template-rows:minmax(0,1fr) 12px;min-height:0}
  tool-rail{grid-row:1/3}
  .body>fold-arrow,browser-panel{grid-row:1/3}
  .body>fold-arrow{align-self:start;margin-top:296px}
  model-view{grid-area:1/3}
  .v{grid-area:1/4;--lead:27px;--size:214px}
  .h{grid-area:2/3;--size:420px}
  .r{grid-column:5}
  browser-panel{grid-column:6}
  .edge{background:#63b1c8}`,
  `<title-bar></title-bar><menu-bar></menu-bar><locate-bar></locate-bar><tool-bar></tool-bar><fold-arrow></fold-arrow>
   <div class="body"><tool-rail></tool-rail><fold-arrow dir="left"></fold-arrow><model-view></model-view><scroll-strip vertical class="v"></scroll-strip><scroll-strip horizontal class="h"></scroll-strip><fold-arrow dir="right" class="r"></fold-arrow><browser-panel></browser-panel></div>
   <fold-arrow dir="down"></fold-arrow><status-bar></status-bar><div class="edge"></div>`);
</script>
</body>
</html>
